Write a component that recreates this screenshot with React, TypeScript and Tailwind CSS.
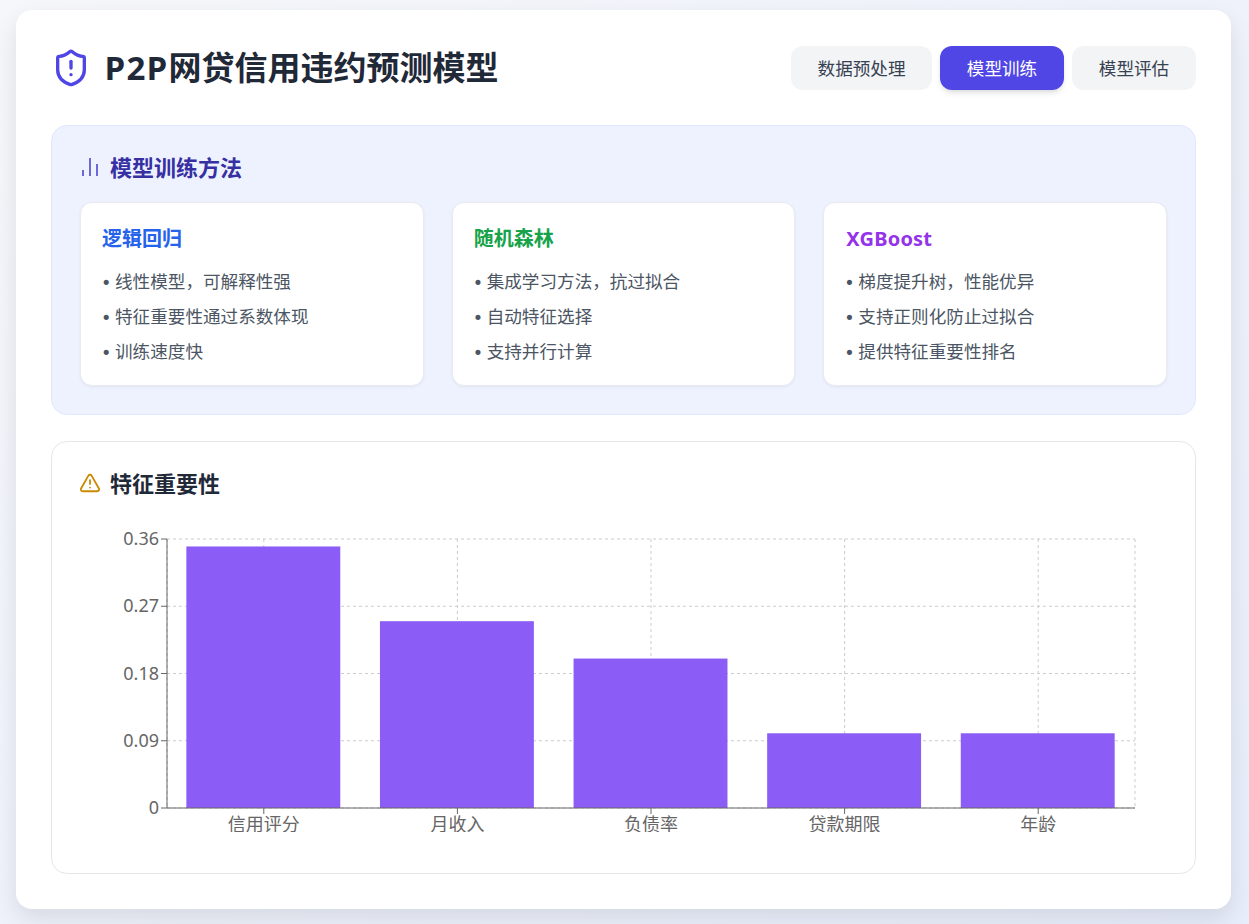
import { ChartNoAxesColumn, ShieldAlert, TriangleAlert } from 'lucide-react'

const font = '[font-family:"Noto_Sans","Noto_Sans_CJK_SC",sans-serif]'

const methods = [
  {
    title: '逻辑回归',
    color: 'text-[#2563eb]',
    items: ['线性模型，可解释性强', '特征重要性通过系数体现', '训练速度快'],
  },
  {
    title: '随机森林',
    color: 'text-[#16a34a]',
    items: ['集成学习方法，抗过拟合', '自动特征选择', '支持并行计算'],
  },
  {
    title: 'XGBoost',
    color: 'pl-px tracking-[0.2px] text-[#9333ea]',
    items: ['梯度提升树，性能优异', '支持正则化防止过拟合', '提供特征重要性排名'],
  },
]

const features = [
  { name: '信用评分', value: 0.35 },
  { name: '月收入', value: 0.25 },
  { name: '负债率', value: 0.2 },
  { name: '贷款期限', value: 0.1 },
  { name: '年龄', value: 0.1 },
]

const yTicks = ['0', '0.09', '0.18', '0.27', '0.36']

const FeatureChart = () => {
  const left = 87
  const right = 1055
  const top = 15
  const bottom = 284
  const band = (right - left) / features.length
  const tickY = (i: number) => bottom - (i * (bottom - top)) / 4
  const centerX = (i: number) => left + band * (i + 0.5)

  return (
    <svg width={1087} height={308} className="block overflow-hidden">
      <g stroke="#ccc" strokeDasharray="3 3" fill="none">
        {yTicks.map((_, i) => (
          <line key={i} x1={left} x2={right} y1={tickY(i)} y2={tickY(i)} />
        ))}
        {features.map((_, i) => (
          <line key={i} x1={centerX(i)} x2={centerX(i)} y1={top} y2={bottom} />
        ))}
        <line x1={left} x2={left} y1={top} y2={bottom} />
        <line x1={right} x2={right} y1={top} y2={bottom} />
      </g>
      {features.map((f, i) => {
        const h = (f.value / 0.36) * (bottom - top)
        return (
          <rect
            key={f.name}
            x={left + band * i + band * 0.1}
            y={bottom - h}
            width={band * 0.795}
            height={h}
            fill="#8b5cf6"
          />
        )
      })}
      <g stroke="#666" fill="none">
        <line x1={left} x2={left} y1={top} y2={bottom} />
        <line x1={left} x2={right} y1={bottom} y2={bottom} />
        {yTicks.map((_, i) => (
          <line key={i} x1={left - 6} x2={left} y1={tickY(i)} y2={tickY(i)} />
        ))}
        {features.map((_, i) => (
          <line key={i} x1={centerX(i)} x2={centerX(i)} y1={bottom} y2={bottom + 6} />
        ))}
      </g>
      <g fill="#666" fontSize={18}>
        {yTicks.map((t, i) => (
          <text key={t} x={left - 8} y={tickY(i) + 6} textAnchor="end">
            {t}
          </text>
        ))}
        {features.map((f, i) => (
          <text key={f.name} x={centerX(i)} y={bottom + 23} textAnchor="middle">
            {f.name}
          </text>
        ))}
      </g>
    </svg>
  )
}

const App = () => (
  <div
    className={`${font} min-h-screen bg-gradient-to-br from-[#f5f7fa] to-[#e8edfb] pt-2.5 pr-[18px] pb-[15px] pl-4`}
  >
    <div className="rounded-2xl bg-white px-[35px] pt-9 pb-[35px] shadow-[0_10px_25px_rgba(0,0,0,0.1)]">
      <header className="mb-[35px] flex items-center justify-between">
        <h1 className="flex items-center gap-[13.5px] text-[33px] font-bold leading-[44px] text-[#1f2937]">
          <ShieldAlert size={40} className="text-[#4f46e5]" />
          <span>
            <span className="tracking-[1.2px] [font-family:'Open_Sans',sans-serif]">P2P</span>
            网贷信用违约预测模型
          </span>
        </h1>
        <nav className="flex gap-2 text-[17.6px] text-[#374151]">
          <button className="h-11 rounded-xl bg-[#f3f4f6] px-[26.5px]">数据预处理</button>
          <button className="h-11 rounded-xl bg-[#4f46e5] px-[26.8px] text-white shadow-[0_4px_6px_-1px_rgba(0,0,0,0.1),0_2px_4px_-2px_rgba(0,0,0,0.1)]">
            模型训练
          </button>
          <button className="h-11 rounded-xl bg-[#f3f4f6] px-[26.8px]">模型评估</button>
        </nav>
      </header>

      <section className="mb-[26px] rounded-2xl border border-[#e0e7ff] bg-[#eef2ff] p-7">
        <h2 className="mb-[22px] flex h-[26px] items-center gap-2 text-[22px] font-bold leading-[26px] text-[#3730a3]">
          <ChartNoAxesColumn
            size={24}
            strokeWidth={1.5}
            strokeLinecap="butt"
            className="-ml-0.5 text-[#4338ca]"
          />
          模型训练方法
        </h2>
        <div className="grid grid-cols-3 gap-7">
          {methods.map((m) => (
            <div
              key={m.title}
              className="rounded-xl border border-[#e9ebf0] bg-white px-[21px] pt-[21px] pb-[20.2px] shadow-[0_1px_3px_rgba(0,0,0,0.06)]"
            >
              <h3 className={`mb-3.5 text-[20px] font-bold leading-[30px] ${m.color}`}>
                {m.title}
              </h3>
              <ul className="flex flex-col gap-[8.8px] text-[17.6px] leading-[26.4px] text-[#4b5563]">
                {m.items.map((item) => (
                  <li key={item} className="flex">
                    <span className="w-[13px] -translate-x-px translate-y-[1.5px] [font-family:'DejaVu_Sans',sans-serif]">
                      •
                    </span>
                    {item}
                  </li>
                ))}
              </ul>
            </div>
          ))}
        </div>
      </section>

      <section className="rounded-2xl border border-[#e5e7eb] bg-white p-7">
        <h2 className="mb-7 flex h-[26px] items-center gap-[9px] text-[22px] font-bold leading-[26px] text-[#1f2937]">
          <TriangleAlert size={22} className="-ml-px text-[#ca8a04]" />
          特征重要性
        </h2>
        <div className="h-[321px]">
          <FeatureChart />
        </div>
      </section>
    </div>
  </div>
)

export default App
